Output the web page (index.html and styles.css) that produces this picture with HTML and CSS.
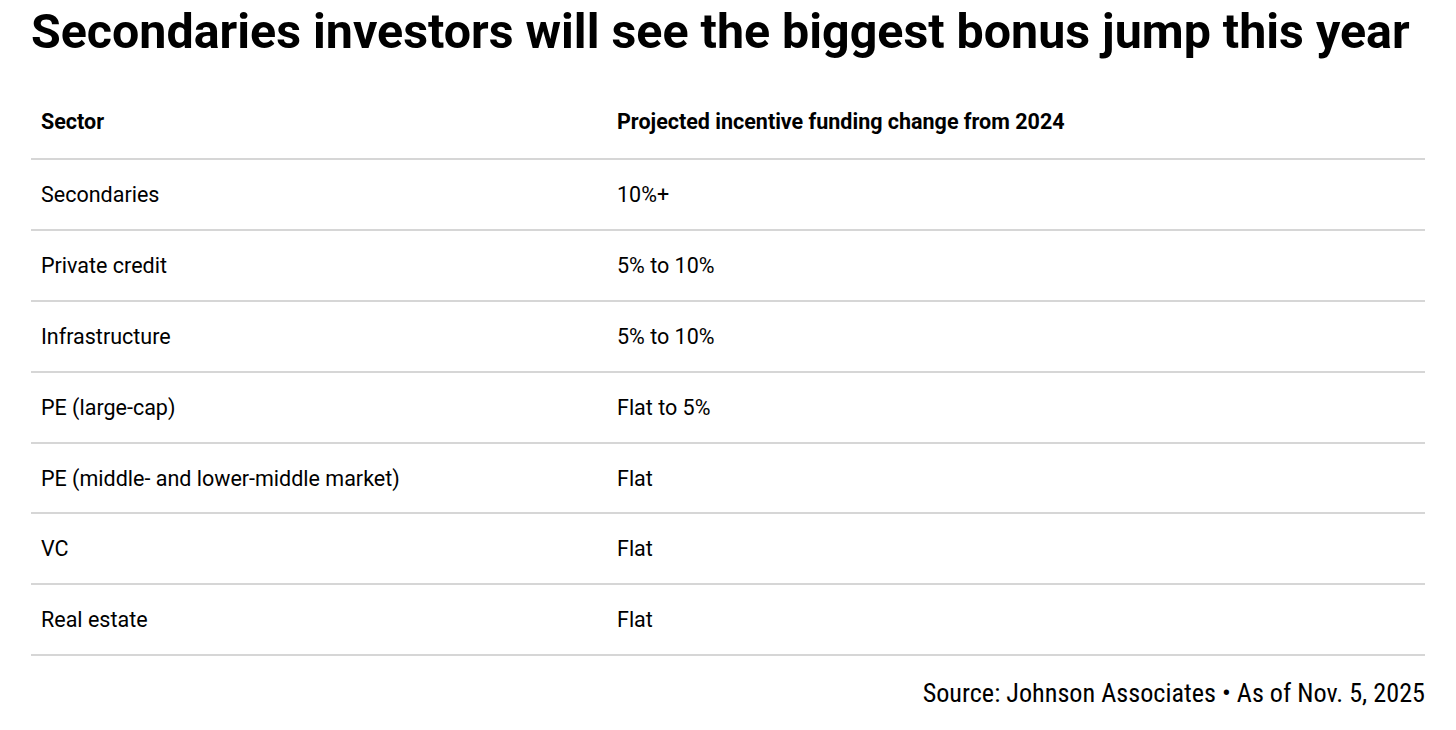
FILE: index.html
```html
<!DOCTYPE html>
<html lang="en">
<head>
<meta charset="utf-8">
<title>Secondaries investors bonus</title>
<link rel="stylesheet" href="styles.css">
</head>
<body>
<main class="chart">
  <h1 class="title">Secondaries investors will see the biggest bonus jump this year</h1>
  <table class="data">
    <thead>
      <tr><th class="c1">Sector</th><th>Projected incentive funding change from 2024</th></tr>
    </thead>
    <tbody>
      <tr><td class="c1">Secondaries</td><td>10%+</td></tr>
      <tr><td class="c1">Private credit</td><td>5% to 10%</td></tr>
      <tr><td class="c1">Infrastructure</td><td>5% to 10%</td></tr>
      <tr><td class="c1">PE (large-cap)</td><td>Flat to 5%</td></tr>
      <tr><td class="c1">PE (middle- and lower-middle market)</td><td>Flat</td></tr>
      <tr><td class="c1">VC</td><td>Flat</td></tr>
      <tr><td class="c1">Real estate</td><td>Flat</td></tr>
    </tbody>
  </table>
  <p class="source">Source: Johnson Associates • As of Nov. 5, 2025</p>
</main>
</body>
</html>
```
FILE: styles.css
```css
html, body {
  margin: 0;
  padding: 0;
  background: #ffffff;
}
body {
  font-family: Roboto, "Liberation Sans", sans-serif;
  color: #000000;
}
.chart {
  padding: 4px 31px 0 31px;
}
.title {
  margin: 0;
  font-size: 48.35px;
  font-weight: 700;
  line-height: 56px;
  letter-spacing: 0;
}
.data {
  width: 100%;
  border-collapse: collapse;
  margin-top: 25px;
  font-size: 21.5px;
}
.data th, .data td {
  text-align: left;
  padding: 0 10px;
  border-bottom: 2px solid #d6d6d6;
  height: 68.9px;
}
.data th {
  font-weight: 700;
  height: 73px;
}
.data .c1 {
  width: 556px;
}
.source {
  margin: 22px 0 0 0;
  text-align: right;
  font-size: 26.2px;
  font-stretch: 75%;
}
```
